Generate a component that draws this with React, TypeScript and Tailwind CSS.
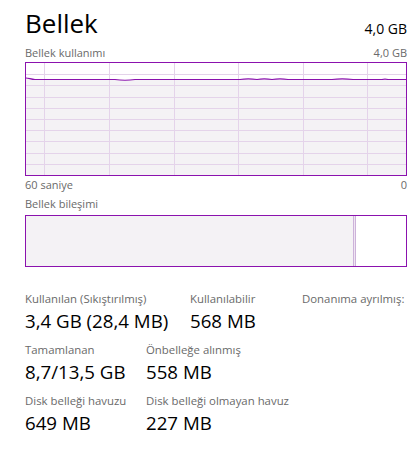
import React from "react";

const verts = [18, 83, 148, 212, 277, 341];
const hors = [1, 2, 3, 4, 5, 6, 7, 8, 9].map((k) => Math.round(11.2 * k) + 0.5);

const linePath =
  "M0,15 C3,15 5,16.5 9,16.5 L89,16.5 Q99,18 109,16.5 L214,16.5 Q222,15.4 231,16.5 Q238,15.4 246,16.5 Q254,15.4 262,16.5 L306,16.5 Q316,15.4 327,16.5 L356,16.5 Q359,15.6 362,16.5 L380,16.5";

function UsageChart() {
  return (
    <div className="mt-[1px] h-[114px] w-full border border-[#8b12ae] bg-white">
      <svg width="380" height="112" viewBox="0 0 380 112" className="block">
        <path d={linePath + " L380,112 L0,112 Z"} fill="#f4f2f5" />
        {hors.map((y) => (
          <line key={y} x1="0" x2="380" y1={y} y2={y} stroke="#e4d3ea" strokeWidth="1" />
        ))}
        {verts.map((x) => (
          <line key={x} x1={x + 0.5} x2={x + 0.5} y1="0" y2="112" stroke="#e4d3ea" strokeWidth="1" />
        ))}
        <path d={linePath} fill="none" stroke="#8b12ae" strokeWidth="1.2" />
      </svg>
    </div>
  );
}

function Stat({ label, value, w }: { label: string; value: string; w?: string }) {
  return (
    <div className={w}>
      <div className="text-[11.4px] leading-[16px] text-[#6a6a6a] whitespace-nowrap">{label}</div>
      <div className="mt-[1px] text-[18.7px] leading-[26px] text-black whitespace-nowrap">{value}</div>
    </div>
  );
}

export default function App() {
  return (
    <div className="w-[417px] h-[454px] overflow-hidden bg-white pl-[25px] pr-[10px] font-['Open_Sans',sans-serif]">
      <div className="pt-[7px] flex items-baseline justify-between">
        <div className="text-[26px] leading-[32px] text-black">Bellek</div>
        <div className="text-[14px] leading-[20px] text-black relative top-[1px]">4,0 GB</div>
      </div>
      <div className="mt-[6px] flex justify-between text-[11px] leading-[16px] text-[#6a6a6a]">
        <span>Bellek kullanımı</span>
        <span>4,0 GB</span>
      </div>
      <UsageChart />
      <div className="mt-[1px] flex justify-between text-[11px] leading-[16px] text-[#6a6a6a]">
        <span>60 saniye</span>
        <span>0</span>
      </div>
      <div className="mt-[3px] text-[11px] leading-[16px] text-[#6a6a6a]">Bellek bileşimi</div>
      <div className="mt-[3px] h-[52px] w-full border border-[#8b12ae] flex">
        <div className="w-[327px] h-full bg-[#f4f2f5]" />
        <div className="w-px h-full bg-[#cdb2da]" />
        <div className="w-px h-full bg-[#efe6f2]" />
        <div className="w-px h-full bg-[#cdb2da]" />
        <div className="flex-1 h-full bg-white" />
      </div>
      <div className="mt-[24px] flex flex-col gap-[8px]">
        <div className="flex">
          <Stat w="w-[165px]" label="Kullanılan (Sıkıştırılmış)" value="3,4 GB (28,4 MB)" />
          <Stat w="w-[112px]" label="Kullanılabilir" value="568 MB" />
          <Stat label="Donanıma ayrılmış:" value="" />
        </div>
        <div className="flex">
          <Stat w="w-[121px]" label="Tamamlanan" value="8,7/13,5 GB" />
          <Stat label="Önbelleğe alınmış" value="558 MB" />
        </div>
        <div className="flex">
          <Stat w="w-[121px]" label="Disk belleği havuzu" value="649 MB" />
          <Stat label="Disk belleği olmayan havuz" value="227 MB" />
        </div>
      </div>
    </div>
  );
}
